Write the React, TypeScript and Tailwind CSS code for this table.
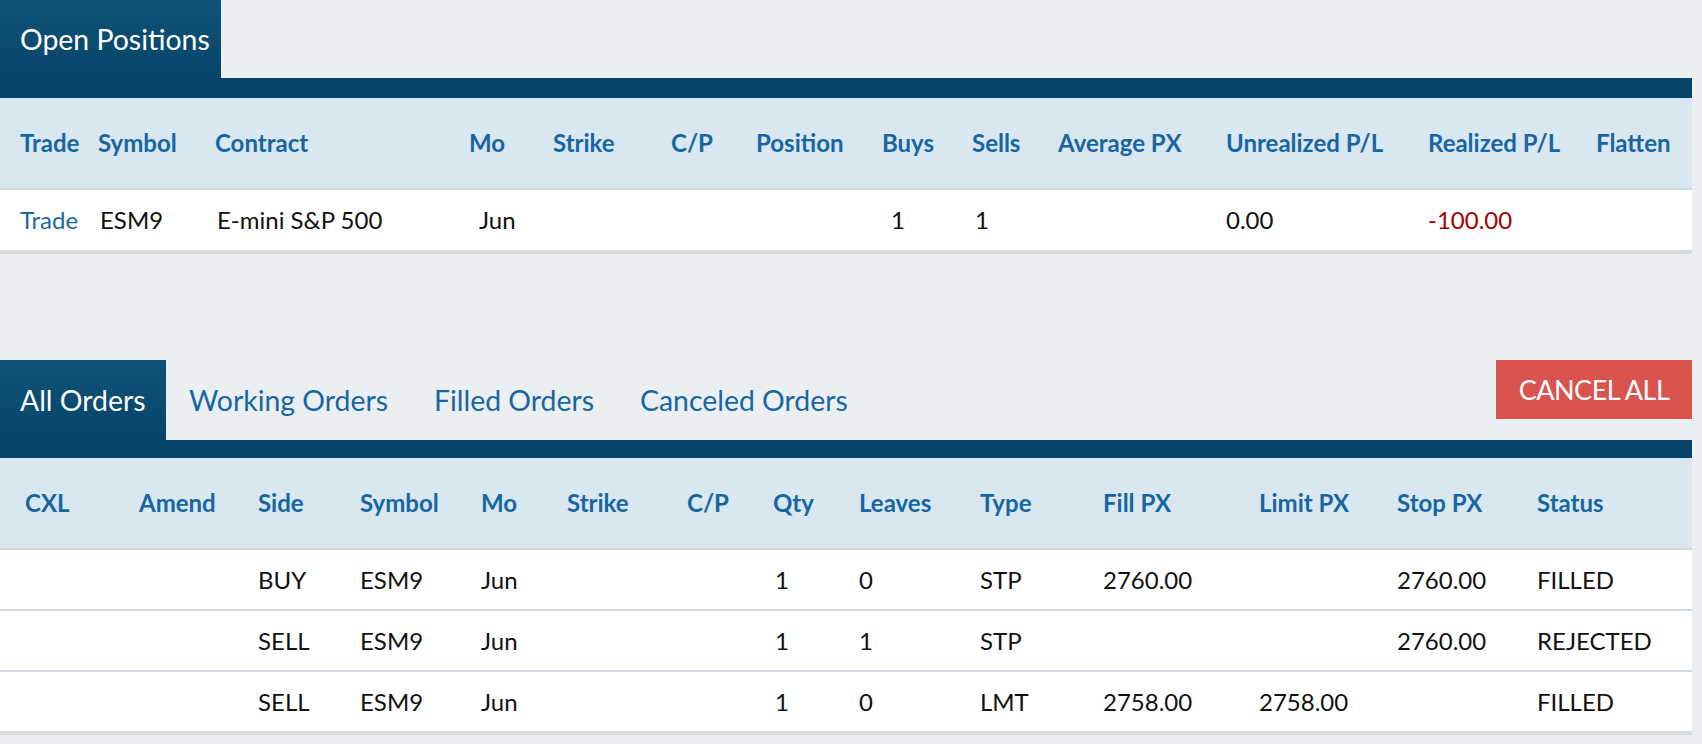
import React from "react";

const navy = "bg-[#08446a]";

const positionCols =
  "grid grid-cols-[98px_117px_254px_84px_118px_85px_126px_90px_86px_168px_202px_168px_1fr]";
const orderCols =
  "grid grid-cols-[139px_119px_102px_121px_86px_120px_86px_86px_121px_123px_156px_138px_140px_1fr]";

const positionHeaders = [
  "Trade",
  "Symbol",
  "Contract",
  "Mo",
  "Strike",
  "C/P",
  "Position",
  "Buys",
  "Sells",
  "Average PX",
  "Unrealized P/L",
  "Realized P/L",
  "Flatten",
];

const orderHeaders = [
  "CXL",
  "Amend",
  "Side",
  "Symbol",
  "Mo",
  "Strike",
  "C/P",
  "Qty",
  "Leaves",
  "Type",
  "Fill PX",
  "Limit PX",
  "Stop PX",
  "Status",
];

const orders = [
  { side: "BUY", symbol: "ESM9", mo: "Jun", qty: "1", leaves: "0", type: "STP", fill: "2760.00", limit: "", stop: "2760.00", status: "FILLED" },
  { side: "SELL", symbol: "ESM9", mo: "Jun", qty: "1", leaves: "1", type: "STP", fill: "", limit: "", stop: "2760.00", status: "REJECTED" },
  { side: "SELL", symbol: "ESM9", mo: "Jun", qty: "1", leaves: "0", type: "LMT", fill: "2758.00", limit: "2758.00", stop: "", status: "FILLED" },
];

function Tab({ label, active }: { label: string; active?: boolean }) {
  if (active) {
    return (
      <div className="flex h-full items-center whitespace-nowrap bg-gradient-to-b from-[#0f5477] to-[#08446a] pl-[20px] text-[28.4px] text-white">
        {label}
      </div>
    );
  }
  return (
    <div className="flex h-full items-center whitespace-nowrap px-[23px] text-[28.4px] text-[#1766a2]">{label}</div>
  );
}

export default function App() {
  return (
    <div className="min-h-screen bg-[#ebeff2] pr-[10px] font-['Lato','Liberation_Sans',sans-serif] text-[24px] leading-none text-[#111]">
      {/* open positions */}
      <section>
        <div className="flex h-[78px]">
          <div className="w-[221px]">
            <Tab label="Open Positions" active />
          </div>
        </div>
        <div className={`h-[20px] ${navy}`} />
        <div className={`${positionCols} h-[92px] items-center border-b-2 border-[#cfd8de] bg-[#d9e7f0] font-bold text-[#1766a2]`}>
          {positionHeaders.map((h, i) => (
            <div key={h} className={i === 0 ? "pl-[20px]" : ""}>
              {h}
            </div>
          ))}
        </div>
        <div className={`${positionCols} h-[64px] items-center border-b-4 border-[#d9dbdc] bg-white`}>
          <div className="pl-[20px] text-[#1a69a5]">Trade</div>
          <div className="pl-[2px]">ESM9</div>
          <div className="pl-[2px]">E-mini S&amp;P 500</div>
          <div className="pl-[10px]">Jun</div>
          <div />
          <div />
          <div />
          <div className="pl-[9px]">1</div>
          <div className="pl-[3px]">1</div>
          <div />
          <div>0.00</div>
          <div className="text-[#a30000]">-100.00</div>
          <div />
        </div>
      </section>

      {/* orders */}
      <section className="mt-[106px]">
        <div className="flex h-[80px] items-stretch">
          <div className="w-[166px]">
            <Tab label="All Orders" active />
          </div>
          <Tab label="Working Orders" />
          <Tab label="Filled Orders" />
          <Tab label="Canceled Orders" />
          <button className="ml-auto h-[59px] w-[196px] bg-[#d9534f] text-[27px] tracking-[-0.5px] text-white">
            CANCEL ALL
          </button>
        </div>
        <div className={`h-[18px] ${navy}`} />
        <div className={`${orderCols} h-[92px] items-center border-b-2 border-[#cfd8de] bg-[#d9e7f0] font-bold text-[#1766a2]`}>
          {orderHeaders.map((h, i) => (
            <div key={h} className={i === 0 ? "pl-[25px]" : ""}>
              {h}
            </div>
          ))}
        </div>
        {orders.map((o, idx) => (
          <div
            key={idx}
            className={`${orderCols} items-center bg-white ${
              idx === orders.length - 1 ? "h-[63px] border-b-4 border-[#d9dbdc]" : "h-[61px] border-b-2 border-[#d3d9de]"
            }`}
          >
            <div />
            <div />
            <div>{o.side}</div>
            <div>{o.symbol}</div>
            <div>{o.mo}</div>
            <div />
            <div />
            <div className="pl-[2px]">{o.qty}</div>
            <div>{o.leaves}</div>
            <div>{o.type}</div>
            <div>{o.fill}</div>
            <div>{o.limit}</div>
            <div>{o.stop}</div>
            <div>{o.status}</div>
          </div>
        ))}
      </section>
    </div>
  );
}
